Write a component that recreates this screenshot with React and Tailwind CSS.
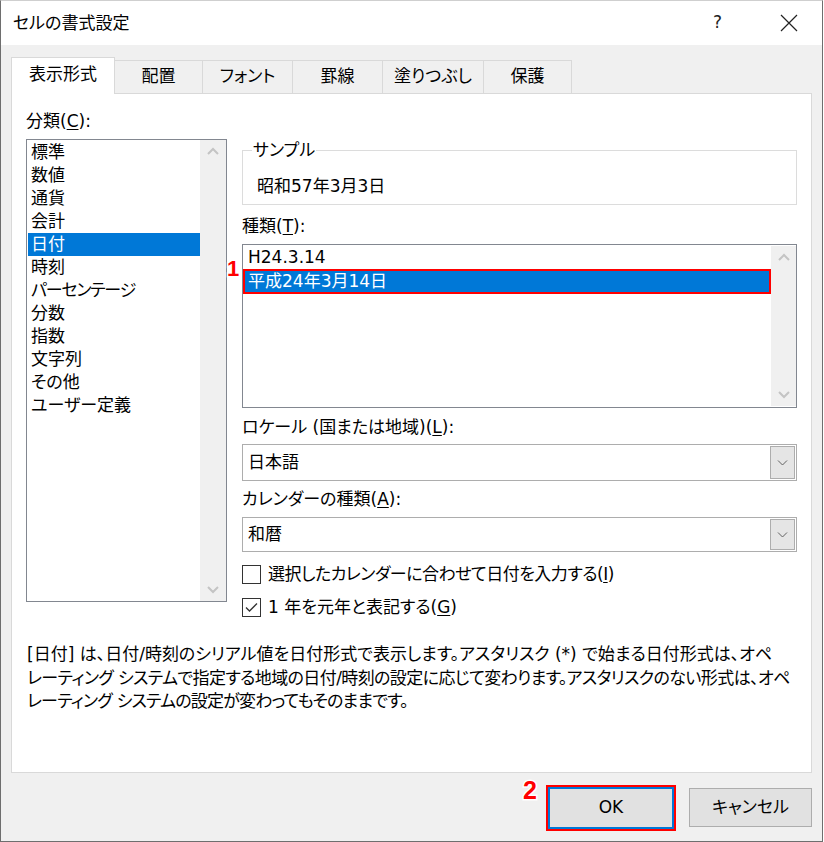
const FONT = "font-['DejaVu_Sans','Noto_Sans_CJK_JP',sans-serif] [font-feature-settings:'palt']";

const categories = ['標準', '数値', '通貨', '会計', '日付', '時刻', 'パーセンテージ', '分数', '指数', '文字列', 'その他', 'ユーザー定義'];

function Mn({ label, k }) {
  return (
    <span>
      {label}(<span className="underline underline-offset-2">{k}</span>)
    </span>
  );
}

function ScrollArrow({ dir }) {
  return (
    <svg width="12" height="8" viewBox="0 0 12 8">
      <polyline
        points={dir === 'up' ? '1,7 6,2 11,7' : '1,1 6,6 11,1'}
        fill="none"
        stroke="#c4c4c4"
        strokeWidth="2"
      />
    </svg>
  );
}

function ScrollBar({ w }) {
  return (
    <div className={`${w} bg-[#f0f0f0] flex flex-col items-center justify-between py-[7px]`}>
      <ScrollArrow dir="up" />
      <ScrollArrow dir="down" />
    </div>
  );
}

function Combo({ value, h }) {
  return (
    <div className={`${h} border border-[#adadad] bg-white flex items-center`}>
      <span className="flex-1 pl-[5px] leading-[23px]">{value}</span>
      <div className="w-[25px] self-stretch m-px border border-[#adadad] bg-[#e5e5e5] flex items-center justify-center">
        <svg width="11" height="6" viewBox="0 0 11 6">
          <polyline points="1,0.5 5.5,5 10,0.5" fill="none" stroke="#606060" strokeWidth="1" />
        </svg>
      </div>
    </div>
  );
}

function Check({ checked, children, track = '' }) {
  return (
    <div className="flex items-center h-[23px]">
      <div className="w-[19px] h-[19px] border border-[#333] bg-white flex items-center justify-center">
        {checked && (
          <svg width="15" height="15" viewBox="0 0 15 15">
            <polyline points="2,7.5 5.5,11 13,3.5" fill="none" stroke="#333" strokeWidth="1.3" />
          </svg>
        )}
      </div>
      <span className={`ml-[7px] leading-[23px] ${track}`}>{children}</span>
    </div>
  );
}

const tabs = [
  { name: '配置', w: 'w-[88px]' },
  { name: 'フォント', w: 'w-[90px]' },
  { name: '罫線', w: 'w-[90px]' },
  { name: '塗りつぶし', w: 'w-[101px]' },
  { name: '保護', w: 'w-[88px]' },
];

const badge = "absolute font-['Liberation_Sans',Arial,sans-serif] font-bold text-[#ff0000] [-webkit-text-stroke:3px_white] [paint-order:stroke_fill]";

export default function App() {
  return (
    <div className={`w-[824px] h-[842px] bg-white text-black text-[17px] ${FONT}`}>
      <div className="w-[823px] h-[842px] flex flex-col border-l border-r border-b border-t border-[#6e6e6e] border-t-[#cfcfcf]">
        {/* title bar */}
        <div className="h-[44px] bg-white flex items-center pl-[12px] pr-[24px]">
          <span className="leading-[23px]">セルの書式設定</span>
          <span className="ml-auto text-[17px] text-[#222] font-['DejaVu_Sans',sans-serif]">?</span>
          <svg className="ml-[58px]" width="18" height="18" viewBox="0 0 18 18">
            <path d="M1 1 L17 17 M17 1 L1 17" stroke="#222" strokeWidth="1.2" />
          </svg>
        </div>

        <div className="flex-1 bg-[#f0f0f0] px-[10px] flex flex-col">
          {/* tabs */}
          <div className="flex items-end pt-[12px]">
            <div className="relative z-10 -mb-px w-[104px] h-[37px] bg-white border border-b-0 border-[#d9d9d9] flex items-center justify-center pb-[2px]">
              表示形式
            </div>
            {tabs.map((t) => (
              <div
                key={t.name}
                className={`${t.w} h-[33px] border-t border-r border-[#d9d9d9] flex items-center justify-center`}
              >
                {t.name}
              </div>
            ))}
          </div>

          {/* panel */}
          <div className="h-[680px] bg-white border border-[#d9d9d9] pl-[14px] pt-[16px]">
            <div className="flex">
              {/* left column */}
              <div className="w-[201px]">
                <div className="h-[23px] leading-[23px]">
                  <Mn label="分類" k="C" />:
                </div>
                <div className="mt-[6px] h-[463px] border border-[#828790] flex">
                  <div className="flex-1 pl-px pt-px">
                    {categories.map((c) => (
                      <div
                        key={c}
                        className={`h-[23px] leading-[23px] pl-[3px] ${c === '日付' ? 'bg-[#0078d7] text-white' : ''} ${c === 'パーセンテージ' ? 'tracking-[-1.2px]' : ''}`}
                      >
                        {c}
                      </div>
                    ))}
                  </div>
                  <ScrollBar w="w-[26px]" />
                </div>
              </div>

              {/* right column */}
              <div className="ml-[15px] w-[555px] mt-[29px]">
                <fieldset className="border border-[#dcdcdc]">
                  <legend className="ml-[9px] px-[1px] leading-[23px]">サンプル</legend>
                  <div className="h-[23px] leading-[23px] pl-[14px] mt-[13px] mb-[6px]">昭和57年3月3日</div>
                </fieldset>

                <div className="mt-[10px] h-[23px] leading-[23px]">
                  <Mn label="種類" k="T" />:
                </div>
                <div className="mt-[6px] h-[164px] border border-[#828790] flex">
                  <div className="flex-1 pt-px">
                    <div className="h-[23px] leading-[23px] pl-[5px]">H24.3.14</div>
                    <div className="relative h-[25px] leading-[21px] pl-[3px] border-2 border-[#ff0000] bg-[#0078d7] text-white">
                      平成24年3月14日
                      <span className={`${badge} -left-[18px] -top-[15px] text-[22px] leading-[26px]`}>1</span>
                    </div>
                  </div>
                  <div className="my-px">
                    <ScrollBar w="w-[25px] h-full" />
                  </div>
                </div>

                <div className="mt-[8px] h-[23px] leading-[23px]">
                  ロケール (国または地域)(<span className="underline underline-offset-2">L</span>):
                </div>
                <div className="mt-[5px]">
                  <Combo value="日本語" h="h-[37px]" />
                </div>

                <div className="mt-[7px] h-[23px] leading-[23px]">
                  <Mn label="カレンダーの種類" k="A" />:
                </div>
                <div className="mt-[6px]">
                  <Combo value="和暦" h="h-[35px]" />
                </div>

                <div className="mt-[11px]">
                  <Check checked={false} track="tracking-[-0.5px]">
                    <Mn label="選択したカレンダーに合わせて日付を入力する" k="I" />
                  </Check>
                </div>
                <div className="mt-[10px]">
                  <Check checked>
                    <Mn label="1 年を元年と表記する" k="G" />
                  </Check>
                </div>
              </div>
            </div>

            {/* description */}
            <div className="mt-[24px] pl-px leading-[23.5px] whitespace-nowrap">
              <div>[日付] は、日付/時刻のシリアル値を日付形式で表示します。アスタリスク (*) で始まる日付形式は、オペ</div>
              <div className="tracking-[-0.6px]">レーティング システムで指定する地域の日付/時刻の設定に応じて変わります。アスタリスクのない形式は、オペ</div>
              <div className="tracking-[-0.8px]">レーティング システムの設定が変わってもそのままです。</div>
            </div>
          </div>

          {/* buttons */}
          <div className="flex justify-end items-start mt-[12px]">
            <div className="relative w-[130px] h-[46px] border-2 border-[#ff0000] flex">
              <span className={`${badge} -left-[25px] -top-[12px] text-[25px] leading-[30px]`}>2</span>
              <div className="flex-1 border-2 border-[#0078d7] bg-[#e1e1e1] flex items-center justify-center">
                OK
              </div>
            </div>
            <div className="ml-[13px] mt-[3px] w-[123px] h-[39px] border border-[#adadad] bg-[#e1e1e1] flex items-center justify-center">
              キャンセル
            </div>
          </div>
        </div>
      </div>
    </div>
  );
}
